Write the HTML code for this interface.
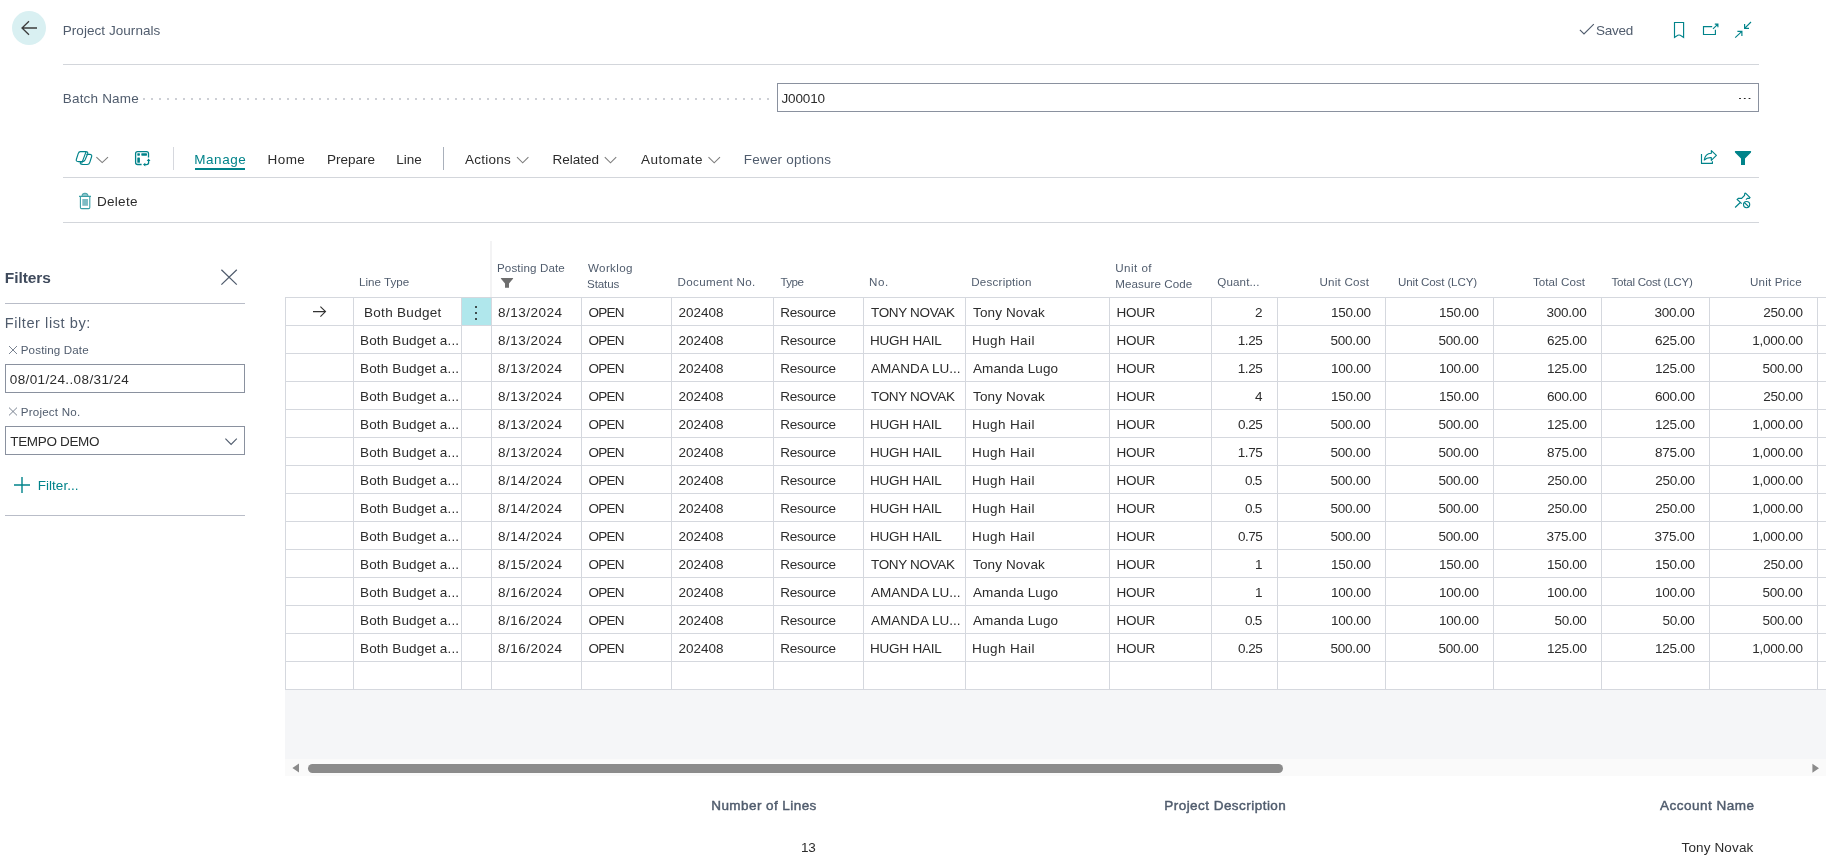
<!DOCTYPE html>
<html><head><meta charset="utf-8"><title>Project Journals</title>
<style>
*{box-sizing:border-box;margin:0;padding:0}
html,body{width:1826px;height:867px;overflow:hidden;background:#fff}
body{font-family:"Liberation Sans",sans-serif;font-size:14px;color:#212121;position:relative}
.a{position:absolute;white-space:nowrap}
.t14{font-size:14px;line-height:20px}
.hdr{color:#505c6d}
.teal{color:#00838a}
.line{position:absolute;height:1px;background:#d3d6db}
/* grid */
.hl{position:absolute;left:285px;width:1541px;height:1px;background:#d5d8de}
.vl{position:absolute;top:297px;height:393px;width:1px;background:#d5d8de}
.c{position:absolute;white-space:nowrap;height:28px;line-height:28px;font-size:14px;color:#212121;padding-top:1px}
.t{position:absolute;white-space:nowrap;line-height:20px}
.ch{position:absolute;white-space:nowrap;font-size:12px;line-height:16px;color:#505c6d}
.ft{position:absolute;white-space:nowrap;font-size:14px;line-height:20px;text-align:right;width:300px}
.ftb{font-weight:bold;color:#505c6d}
</style></head><body>

<!-- top bar -->
<div class="a" style="left:12px;top:11px;width:34px;height:34px;border-radius:50%;background:#d9f0f2"></div>


<div class="line" style="left:63px;top:64px;width:1696px"></div>

<!-- batch name -->
<div class="a" style="left:143px;top:98px;width:626px;height:2px;background-image:linear-gradient(90deg,#cdcfd5 2px,transparent 2px);background-size:8px 2px"></div>
<div class="a" style="left:777px;top:83px;width:982px;height:29px;border:1px solid #8a919f;background:#fff"></div>
<div class="a" style="left:1739.4px;top:97.5px;width:1.8px;height:1.8px;border-radius:1px;background:#222;box-shadow:4.75px 0 0 #222,9.5px 0 0 #222"></div>

<!-- action bar -->
<div class="a" style="left:173px;top:147px;width:1px;height:23px;background:#d6d8de"></div>
<div class="a" style="left:195px;top:168px;width:50px;height:2px;background:#00838a"></div>
<div class="a" style="left:443px;top:147px;width:1px;height:23px;background:#a9b0bb"></div>


<div class="line" style="left:63px;top:177px;width:1696px"></div>


<div class="line" style="left:63px;top:222px;width:1696px"></div>

<!-- filter pane -->
<div class="line" style="left:5px;top:303px;width:240px;background:#b9bdc8"></div>
<div class="a" style="left:5px;top:364px;width:240px;height:29px;border:1px solid #8a919f;background:#fff"></div>
<div class="a" style="left:5px;top:426px;width:240px;height:29px;border:1px solid #8a919f;background:#fff"></div>
<div class="line" style="left:5px;top:515px;width:240px;background:#b9bdc8"></div>

<!-- column headers -->
<div class="a" style="left:490px;top:241px;width:2px;height:56px;background:#f3f3f4"></div>

<!-- grid -->
<div class="a" style="left:462px;top:298px;width:29px;height:27px;background:#b0e7ec"></div>
<div class="a" style="left:475.4px;top:306px;width:2px;height:2px;border-radius:1px;background:#1a1a1a;box-shadow:0 6px 0 #1a1a1a,0 12px 0 #1a1a1a"></div>
<div class="hl" style="top:297px"></div>
<div class="hl" style="top:325px"></div>
<div class="hl" style="top:353px"></div>
<div class="hl" style="top:381px"></div>
<div class="hl" style="top:409px"></div>
<div class="hl" style="top:437px"></div>
<div class="hl" style="top:465px"></div>
<div class="hl" style="top:493px"></div>
<div class="hl" style="top:521px"></div>
<div class="hl" style="top:549px"></div>
<div class="hl" style="top:577px"></div>
<div class="hl" style="top:605px"></div>
<div class="hl" style="top:633px"></div>
<div class="hl" style="top:661px"></div>
<div class="hl" style="top:689px"></div>
<div class="vl" style="left:285px"></div>
<div class="vl" style="left:353px"></div>
<div class="vl" style="left:461px"></div>
<div class="vl" style="left:491px"></div>
<div class="vl" style="left:581px"></div>
<div class="vl" style="left:671px"></div>
<div class="vl" style="left:773px"></div>
<div class="vl" style="left:863px"></div>
<div class="vl" style="left:965px"></div>
<div class="vl" style="left:1109px"></div>
<div class="vl" style="left:1211px"></div>
<div class="vl" style="left:1277px"></div>
<div class="vl" style="left:1385px"></div>
<div class="vl" style="left:1493px"></div>
<div class="vl" style="left:1601px"></div>
<div class="vl" style="left:1709px"></div>
<div class="vl" style="left:1817px"></div>
<div id="txt" style="position:absolute;left:0;top:0;width:1826px;height:867px;will-change:transform">
<div class="t" id="title" style="left:62.75px;top:21px;font-size:13.5px;color:#505c6d;letter-spacing:0.05px">Project Journals</div>
<div class="t" id="saved" style="left:1596.0px;top:21px;font-size:13.5px;color:#505c6d;letter-spacing:-0.23px">Saved</div>
<div class="t" id="batch" style="left:62.75px;top:89px;font-size:13.5px;color:#505c6d;letter-spacing:0.19px">Batch Name</div>
<div class="t" id="batchv" style="left:781.5px;top:89px;font-size:13.5px;color:#2c2c2c;letter-spacing:-0.14px">J00010</div>
<div class="t" id="manage" style="left:194.25px;top:150px;font-size:13.5px;color:#00838a;letter-spacing:0.56px">Manage</div>
<div class="t" id="home" style="left:267.5px;top:150px;font-size:13.5px;color:#2c2c2c;letter-spacing:0.45px">Home</div>
<div class="t" id="prepare" style="left:327.0px;top:150px;font-size:13.5px;color:#2c2c2c">Prepare</div>
<div class="t" id="linem" style="left:396.25px;top:150px;font-size:13.5px;color:#2c2c2c">Line</div>
<div class="t" id="actions" style="left:465.0px;top:150px;font-size:13.5px;color:#2c2c2c;letter-spacing:0.23px">Actions</div>
<div class="t" id="related" style="left:552.5px;top:150px;font-size:13.5px;color:#2c2c2c">Related</div>
<div class="t" id="automate" style="left:641.0px;top:150px;font-size:13.5px;color:#2c2c2c;letter-spacing:0.52px">Automate</div>
<div class="t" id="fewer" style="left:743.75px;top:150px;font-size:13.5px;color:#505c6d;letter-spacing:0.21px">Fewer options</div>
<div class="t" id="delete" style="left:97.0px;top:192px;font-size:13.5px;color:#2c2c2c;letter-spacing:0.28px">Delete</div>
<div class="t" id="filters" style="left:4.75px;top:268px;font-size:15.5px;color:#3f4a5c;font-weight:bold;letter-spacing:-0.06px">Filters</div>
<div class="t" id="flb" style="left:4.75px;top:313px;font-size:14.6px;color:#505c6d;letter-spacing:0.55px">Filter list by:</div>
<div class="t" id="pdl" style="left:20.75px;top:340px;font-size:11.6px;color:#505c6d;letter-spacing:0.14px">Posting Date</div>
<div class="t" id="pdv" style="left:9.75px;top:370px;font-size:13.5px;color:#2c2c2c;letter-spacing:0.38px">08/01/24..08/31/24</div>
<div class="t" id="pnl" style="left:20.75px;top:402px;font-size:11.6px;color:#505c6d;letter-spacing:0.21px">Project No.</div>
<div class="t" id="pnv" style="left:10.25px;top:432px;font-size:13.5px;color:#2c2c2c;letter-spacing:-0.33px">TEMPO DEMO</div>
<div class="t" id="filt" style="left:37.75px;top:476px;font-size:13.5px;color:#00838a;letter-spacing:0.03px">Filter...</div>
<div class="t" id="h1" style="left:359.0px;top:272px;font-size:11.6px;color:#505c6d;letter-spacing:0.01px">Line Type</div>
<div class="t" id="h2" style="left:497.0px;top:258px;font-size:11.6px;color:#505c6d;letter-spacing:0.13px">Posting Date</div>
<div class="t" id="h3a" style="left:588.0px;top:258px;font-size:11.6px;color:#505c6d;letter-spacing:0.36px">Worklog</div>
<div class="t" id="h3b" style="left:587.0px;top:274px;font-size:11.6px;color:#505c6d;letter-spacing:-0.1px">Status</div>
<div class="t" id="h4" style="left:677.5px;top:272px;font-size:11.6px;color:#505c6d;letter-spacing:0.34px">Document No.</div>
<div class="t" id="h5" style="left:780.5px;top:272px;font-size:11.6px;color:#505c6d;letter-spacing:-0.57px">Type</div>
<div class="t" id="h6" style="left:869.0px;top:272px;font-size:11.6px;color:#505c6d;letter-spacing:0.61px">No.</div>
<div class="t" id="h7" style="left:971.25px;top:272px;font-size:11.6px;color:#505c6d;letter-spacing:0.22px">Description</div>
<div class="t" id="h8a" style="left:1115.25px;top:258px;font-size:11.6px;color:#505c6d;letter-spacing:0.47px">Unit of</div>
<div class="t" id="h8b" style="left:1115.25px;top:274px;font-size:11.6px;color:#505c6d;letter-spacing:0.08px">Measure Code</div>
<div class="t" id="h9" style="left:1217.25px;top:272px;font-size:11.6px;color:#505c6d;letter-spacing:0.13px">Quant...</div>
<div class="t" id="h10" style="left:1319.5px;top:272px;font-size:11.6px;color:#505c6d;letter-spacing:0.21px">Unit Cost</div>
<div class="t" id="h11" style="left:1398.0px;top:272px;font-size:11.6px;color:#505c6d;letter-spacing:-0.15px">Unit Cost (LCY)</div>
<div class="t" id="h12" style="left:1533.0px;top:272px;font-size:11.6px;color:#505c6d;letter-spacing:0.05px">Total Cost</div>
<div class="t" id="h13" style="left:1611.5px;top:272px;font-size:11.6px;color:#505c6d;letter-spacing:-0.25px">Total Cost (LCY)</div>
<div class="t" id="h14" style="left:1750.0px;top:272px;font-size:11.6px;color:#505c6d;letter-spacing:0.16px">Unit Price</div>
<div class="t" id="f1" style="left:711.25px;top:796px;font-size:13.5px;color:#505c6d;-webkit-text-stroke:0.45px #505c6d;letter-spacing:0.43px">Number of Lines</div>
<div class="t" id="f1v" style="left:801.0px;top:838px;font-size:13.5px;color:#2c2c2c;letter-spacing:-0.28px">13</div>
<div class="t" id="f2" style="left:1164.25px;top:796px;font-size:13.5px;color:#505c6d;-webkit-text-stroke:0.45px #505c6d;letter-spacing:0.46px">Project Description</div>
<div class="t" id="f3" style="left:1660.0px;top:796px;font-size:13.5px;color:#505c6d;-webkit-text-stroke:0.45px #505c6d;letter-spacing:0.5px">Account Name</div>
<div class="t" id="f3v" style="left:1681.5px;top:838px;font-size:13.5px;color:#2c2c2c;letter-spacing:0.14px">Tony Novak</div>
<div class="t" style="left:364.0px;top:303px;font-size:13.5px;color:#2c2c2c;letter-spacing:0.3px">Both Budget</div>
<div class="t" style="left:498.0px;top:303px;font-size:13.5px;color:#2c2c2c;letter-spacing:0.49px">8/13/2024</div>
<div class="t" style="left:588.5px;top:303px;font-size:13.5px;color:#2c2c2c;letter-spacing:-0.74px">OPEN</div>
<div class="t" style="left:678.5px;top:303px;font-size:13.5px;color:#2c2c2c;letter-spacing:-0.01px">202408</div>
<div class="t" style="left:780.25px;top:303px;font-size:13.5px;color:#2c2c2c;letter-spacing:-0.28px">Resource</div>
<div class="t" style="left:871.0px;top:303px;font-size:13.5px;color:#2c2c2c;letter-spacing:-0.34px">TONY NOVAK</div>
<div class="t" style="left:973.0px;top:303px;font-size:13.5px;color:#2c2c2c;letter-spacing:0.14px">Tony Novak</div>
<div class="t" style="left:1116.5px;top:303px;font-size:13.5px;color:#2c2c2c;letter-spacing:-0.31px">HOUR</div>
<div class="t" style="left:1255.0px;top:303px;font-size:13.5px;color:#2c2c2c">2</div>
<div class="t" style="left:1331.0px;top:303px;font-size:13.5px;color:#2c2c2c;letter-spacing:-0.27px">150.00</div>
<div class="t" style="left:1439.0px;top:303px;font-size:13.5px;color:#2c2c2c;letter-spacing:-0.27px">150.00</div>
<div class="t" style="left:1546.5px;top:303px;font-size:13.5px;color:#2c2c2c;letter-spacing:-0.23px">300.00</div>
<div class="t" style="left:1654.5px;top:303px;font-size:13.5px;color:#2c2c2c;letter-spacing:-0.23px">300.00</div>
<div class="t" style="left:1763.25px;top:303px;font-size:13.5px;color:#2c2c2c;letter-spacing:-0.29px">250.00</div>
<div class="t" style="left:360.0px;top:331px;font-size:13.5px;color:#2c2c2c;letter-spacing:0.15px">Both Budget a...</div>
<div class="t" style="left:498.0px;top:331px;font-size:13.5px;color:#2c2c2c;letter-spacing:0.49px">8/13/2024</div>
<div class="t" style="left:588.5px;top:331px;font-size:13.5px;color:#2c2c2c;letter-spacing:-0.74px">OPEN</div>
<div class="t" style="left:678.5px;top:331px;font-size:13.5px;color:#2c2c2c;letter-spacing:-0.01px">202408</div>
<div class="t" style="left:780.25px;top:331px;font-size:13.5px;color:#2c2c2c;letter-spacing:-0.28px">Resource</div>
<div class="t" style="left:870.0px;top:331px;font-size:13.5px;color:#2c2c2c;letter-spacing:-0.22px">HUGH HAIL</div>
<div class="t" style="left:972.0px;top:331px;font-size:13.5px;color:#2c2c2c;letter-spacing:0.39px">Hugh Hail</div>
<div class="t" style="left:1116.5px;top:331px;font-size:13.5px;color:#2c2c2c;letter-spacing:-0.31px">HOUR</div>
<div class="t" style="left:1237.75px;top:331px;font-size:13.5px;color:#2c2c2c;letter-spacing:-0.44px">1.25</div>
<div class="t" style="left:1330.5px;top:331px;font-size:13.5px;color:#2c2c2c;letter-spacing:-0.22px">500.00</div>
<div class="t" style="left:1438.5px;top:331px;font-size:13.5px;color:#2c2c2c;letter-spacing:-0.22px">500.00</div>
<div class="t" style="left:1547.0px;top:331px;font-size:13.5px;color:#2c2c2c;letter-spacing:-0.26px">625.00</div>
<div class="t" style="left:1655.0px;top:331px;font-size:13.5px;color:#2c2c2c;letter-spacing:-0.26px">625.00</div>
<div class="t" style="left:1752.25px;top:331px;font-size:13.5px;color:#2c2c2c;letter-spacing:-0.25px">1,000.00</div>
<div class="t" style="left:360.0px;top:359px;font-size:13.5px;color:#2c2c2c;letter-spacing:0.15px">Both Budget a...</div>
<div class="t" style="left:498.0px;top:359px;font-size:13.5px;color:#2c2c2c;letter-spacing:0.49px">8/13/2024</div>
<div class="t" style="left:588.5px;top:359px;font-size:13.5px;color:#2c2c2c;letter-spacing:-0.74px">OPEN</div>
<div class="t" style="left:678.5px;top:359px;font-size:13.5px;color:#2c2c2c;letter-spacing:-0.01px">202408</div>
<div class="t" style="left:780.25px;top:359px;font-size:13.5px;color:#2c2c2c;letter-spacing:-0.28px">Resource</div>
<div class="t" style="left:871.0px;top:359px;font-size:13.5px;color:#2c2c2c;letter-spacing:0.03px">AMANDA LU...</div>
<div class="t" style="left:973.0px;top:359px;font-size:13.5px;color:#2c2c2c;letter-spacing:0.1px">Amanda Lugo</div>
<div class="t" style="left:1116.5px;top:359px;font-size:13.5px;color:#2c2c2c;letter-spacing:-0.31px">HOUR</div>
<div class="t" style="left:1237.75px;top:359px;font-size:13.5px;color:#2c2c2c;letter-spacing:-0.44px">1.25</div>
<div class="t" style="left:1331.0px;top:359px;font-size:13.5px;color:#2c2c2c;letter-spacing:-0.27px">100.00</div>
<div class="t" style="left:1439.0px;top:359px;font-size:13.5px;color:#2c2c2c;letter-spacing:-0.27px">100.00</div>
<div class="t" style="left:1547.0px;top:359px;font-size:13.5px;color:#2c2c2c;letter-spacing:-0.27px">125.00</div>
<div class="t" style="left:1655.0px;top:359px;font-size:13.5px;color:#2c2c2c;letter-spacing:-0.27px">125.00</div>
<div class="t" style="left:1762.5px;top:359px;font-size:13.5px;color:#2c2c2c;letter-spacing:-0.22px">500.00</div>
<div class="t" style="left:360.0px;top:387px;font-size:13.5px;color:#2c2c2c;letter-spacing:0.15px">Both Budget a...</div>
<div class="t" style="left:498.0px;top:387px;font-size:13.5px;color:#2c2c2c;letter-spacing:0.49px">8/13/2024</div>
<div class="t" style="left:588.5px;top:387px;font-size:13.5px;color:#2c2c2c;letter-spacing:-0.74px">OPEN</div>
<div class="t" style="left:678.5px;top:387px;font-size:13.5px;color:#2c2c2c;letter-spacing:-0.01px">202408</div>
<div class="t" style="left:780.25px;top:387px;font-size:13.5px;color:#2c2c2c;letter-spacing:-0.28px">Resource</div>
<div class="t" style="left:871.0px;top:387px;font-size:13.5px;color:#2c2c2c;letter-spacing:-0.34px">TONY NOVAK</div>
<div class="t" style="left:973.0px;top:387px;font-size:13.5px;color:#2c2c2c;letter-spacing:0.14px">Tony Novak</div>
<div class="t" style="left:1116.5px;top:387px;font-size:13.5px;color:#2c2c2c;letter-spacing:-0.31px">HOUR</div>
<div class="t" style="left:1255.0px;top:387px;font-size:13.5px;color:#2c2c2c">4</div>
<div class="t" style="left:1331.0px;top:387px;font-size:13.5px;color:#2c2c2c;letter-spacing:-0.27px">150.00</div>
<div class="t" style="left:1439.0px;top:387px;font-size:13.5px;color:#2c2c2c;letter-spacing:-0.27px">150.00</div>
<div class="t" style="left:1547.0px;top:387px;font-size:13.5px;color:#2c2c2c;letter-spacing:-0.26px">600.00</div>
<div class="t" style="left:1655.0px;top:387px;font-size:13.5px;color:#2c2c2c;letter-spacing:-0.26px">600.00</div>
<div class="t" style="left:1763.25px;top:387px;font-size:13.5px;color:#2c2c2c;letter-spacing:-0.29px">250.00</div>
<div class="t" style="left:360.0px;top:415px;font-size:13.5px;color:#2c2c2c;letter-spacing:0.15px">Both Budget a...</div>
<div class="t" style="left:498.0px;top:415px;font-size:13.5px;color:#2c2c2c;letter-spacing:0.49px">8/13/2024</div>
<div class="t" style="left:588.5px;top:415px;font-size:13.5px;color:#2c2c2c;letter-spacing:-0.74px">OPEN</div>
<div class="t" style="left:678.5px;top:415px;font-size:13.5px;color:#2c2c2c;letter-spacing:-0.01px">202408</div>
<div class="t" style="left:780.25px;top:415px;font-size:13.5px;color:#2c2c2c;letter-spacing:-0.28px">Resource</div>
<div class="t" style="left:870.0px;top:415px;font-size:13.5px;color:#2c2c2c;letter-spacing:-0.22px">HUGH HAIL</div>
<div class="t" style="left:972.0px;top:415px;font-size:13.5px;color:#2c2c2c;letter-spacing:0.39px">Hugh Hail</div>
<div class="t" style="left:1116.5px;top:415px;font-size:13.5px;color:#2c2c2c;letter-spacing:-0.31px">HOUR</div>
<div class="t" style="left:1238.0px;top:415px;font-size:13.5px;color:#2c2c2c;letter-spacing:-0.51px">0.25</div>
<div class="t" style="left:1330.5px;top:415px;font-size:13.5px;color:#2c2c2c;letter-spacing:-0.22px">500.00</div>
<div class="t" style="left:1438.5px;top:415px;font-size:13.5px;color:#2c2c2c;letter-spacing:-0.22px">500.00</div>
<div class="t" style="left:1547.0px;top:415px;font-size:13.5px;color:#2c2c2c;letter-spacing:-0.27px">125.00</div>
<div class="t" style="left:1655.0px;top:415px;font-size:13.5px;color:#2c2c2c;letter-spacing:-0.27px">125.00</div>
<div class="t" style="left:1752.25px;top:415px;font-size:13.5px;color:#2c2c2c;letter-spacing:-0.25px">1,000.00</div>
<div class="t" style="left:360.0px;top:443px;font-size:13.5px;color:#2c2c2c;letter-spacing:0.15px">Both Budget a...</div>
<div class="t" style="left:498.0px;top:443px;font-size:13.5px;color:#2c2c2c;letter-spacing:0.49px">8/13/2024</div>
<div class="t" style="left:588.5px;top:443px;font-size:13.5px;color:#2c2c2c;letter-spacing:-0.74px">OPEN</div>
<div class="t" style="left:678.5px;top:443px;font-size:13.5px;color:#2c2c2c;letter-spacing:-0.01px">202408</div>
<div class="t" style="left:780.25px;top:443px;font-size:13.5px;color:#2c2c2c;letter-spacing:-0.28px">Resource</div>
<div class="t" style="left:870.0px;top:443px;font-size:13.5px;color:#2c2c2c;letter-spacing:-0.22px">HUGH HAIL</div>
<div class="t" style="left:972.0px;top:443px;font-size:13.5px;color:#2c2c2c;letter-spacing:0.39px">Hugh Hail</div>
<div class="t" style="left:1116.5px;top:443px;font-size:13.5px;color:#2c2c2c;letter-spacing:-0.31px">HOUR</div>
<div class="t" style="left:1237.75px;top:443px;font-size:13.5px;color:#2c2c2c;letter-spacing:-0.44px">1.75</div>
<div class="t" style="left:1330.5px;top:443px;font-size:13.5px;color:#2c2c2c;letter-spacing:-0.22px">500.00</div>
<div class="t" style="left:1438.5px;top:443px;font-size:13.5px;color:#2c2c2c;letter-spacing:-0.22px">500.00</div>
<div class="t" style="left:1547.0px;top:443px;font-size:13.5px;color:#2c2c2c;letter-spacing:-0.27px">875.00</div>
<div class="t" style="left:1655.0px;top:443px;font-size:13.5px;color:#2c2c2c;letter-spacing:-0.27px">875.00</div>
<div class="t" style="left:1752.25px;top:443px;font-size:13.5px;color:#2c2c2c;letter-spacing:-0.25px">1,000.00</div>
<div class="t" style="left:360.0px;top:471px;font-size:13.5px;color:#2c2c2c;letter-spacing:0.15px">Both Budget a...</div>
<div class="t" style="left:498.0px;top:471px;font-size:13.5px;color:#2c2c2c;letter-spacing:0.49px">8/14/2024</div>
<div class="t" style="left:588.5px;top:471px;font-size:13.5px;color:#2c2c2c;letter-spacing:-0.74px">OPEN</div>
<div class="t" style="left:678.5px;top:471px;font-size:13.5px;color:#2c2c2c;letter-spacing:-0.01px">202408</div>
<div class="t" style="left:780.25px;top:471px;font-size:13.5px;color:#2c2c2c;letter-spacing:-0.28px">Resource</div>
<div class="t" style="left:870.0px;top:471px;font-size:13.5px;color:#2c2c2c;letter-spacing:-0.22px">HUGH HAIL</div>
<div class="t" style="left:972.0px;top:471px;font-size:13.5px;color:#2c2c2c;letter-spacing:0.39px">Hugh Hail</div>
<div class="t" style="left:1116.5px;top:471px;font-size:13.5px;color:#2c2c2c;letter-spacing:-0.31px">HOUR</div>
<div class="t" style="left:1245.0px;top:471px;font-size:13.5px;color:#2c2c2c;letter-spacing:-0.76px">0.5</div>
<div class="t" style="left:1330.5px;top:471px;font-size:13.5px;color:#2c2c2c;letter-spacing:-0.22px">500.00</div>
<div class="t" style="left:1438.5px;top:471px;font-size:13.5px;color:#2c2c2c;letter-spacing:-0.22px">500.00</div>
<div class="t" style="left:1547.25px;top:471px;font-size:13.5px;color:#2c2c2c;letter-spacing:-0.29px">250.00</div>
<div class="t" style="left:1655.25px;top:471px;font-size:13.5px;color:#2c2c2c;letter-spacing:-0.29px">250.00</div>
<div class="t" style="left:1752.25px;top:471px;font-size:13.5px;color:#2c2c2c;letter-spacing:-0.25px">1,000.00</div>
<div class="t" style="left:360.0px;top:499px;font-size:13.5px;color:#2c2c2c;letter-spacing:0.15px">Both Budget a...</div>
<div class="t" style="left:498.0px;top:499px;font-size:13.5px;color:#2c2c2c;letter-spacing:0.49px">8/14/2024</div>
<div class="t" style="left:588.5px;top:499px;font-size:13.5px;color:#2c2c2c;letter-spacing:-0.74px">OPEN</div>
<div class="t" style="left:678.5px;top:499px;font-size:13.5px;color:#2c2c2c;letter-spacing:-0.01px">202408</div>
<div class="t" style="left:780.25px;top:499px;font-size:13.5px;color:#2c2c2c;letter-spacing:-0.28px">Resource</div>
<div class="t" style="left:870.0px;top:499px;font-size:13.5px;color:#2c2c2c;letter-spacing:-0.22px">HUGH HAIL</div>
<div class="t" style="left:972.0px;top:499px;font-size:13.5px;color:#2c2c2c;letter-spacing:0.39px">Hugh Hail</div>
<div class="t" style="left:1116.5px;top:499px;font-size:13.5px;color:#2c2c2c;letter-spacing:-0.31px">HOUR</div>
<div class="t" style="left:1245.0px;top:499px;font-size:13.5px;color:#2c2c2c;letter-spacing:-0.76px">0.5</div>
<div class="t" style="left:1330.5px;top:499px;font-size:13.5px;color:#2c2c2c;letter-spacing:-0.22px">500.00</div>
<div class="t" style="left:1438.5px;top:499px;font-size:13.5px;color:#2c2c2c;letter-spacing:-0.22px">500.00</div>
<div class="t" style="left:1547.25px;top:499px;font-size:13.5px;color:#2c2c2c;letter-spacing:-0.29px">250.00</div>
<div class="t" style="left:1655.25px;top:499px;font-size:13.5px;color:#2c2c2c;letter-spacing:-0.29px">250.00</div>
<div class="t" style="left:1752.25px;top:499px;font-size:13.5px;color:#2c2c2c;letter-spacing:-0.25px">1,000.00</div>
<div class="t" style="left:360.0px;top:527px;font-size:13.5px;color:#2c2c2c;letter-spacing:0.15px">Both Budget a...</div>
<div class="t" style="left:498.0px;top:527px;font-size:13.5px;color:#2c2c2c;letter-spacing:0.49px">8/14/2024</div>
<div class="t" style="left:588.5px;top:527px;font-size:13.5px;color:#2c2c2c;letter-spacing:-0.74px">OPEN</div>
<div class="t" style="left:678.5px;top:527px;font-size:13.5px;color:#2c2c2c;letter-spacing:-0.01px">202408</div>
<div class="t" style="left:780.25px;top:527px;font-size:13.5px;color:#2c2c2c;letter-spacing:-0.28px">Resource</div>
<div class="t" style="left:870.0px;top:527px;font-size:13.5px;color:#2c2c2c;letter-spacing:-0.22px">HUGH HAIL</div>
<div class="t" style="left:972.0px;top:527px;font-size:13.5px;color:#2c2c2c;letter-spacing:0.39px">Hugh Hail</div>
<div class="t" style="left:1116.5px;top:527px;font-size:13.5px;color:#2c2c2c;letter-spacing:-0.31px">HOUR</div>
<div class="t" style="left:1238.0px;top:527px;font-size:13.5px;color:#2c2c2c;letter-spacing:-0.51px">0.75</div>
<div class="t" style="left:1330.5px;top:527px;font-size:13.5px;color:#2c2c2c;letter-spacing:-0.22px">500.00</div>
<div class="t" style="left:1438.5px;top:527px;font-size:13.5px;color:#2c2c2c;letter-spacing:-0.22px">500.00</div>
<div class="t" style="left:1546.5px;top:527px;font-size:13.5px;color:#2c2c2c;letter-spacing:-0.23px">375.00</div>
<div class="t" style="left:1654.5px;top:527px;font-size:13.5px;color:#2c2c2c;letter-spacing:-0.23px">375.00</div>
<div class="t" style="left:1752.25px;top:527px;font-size:13.5px;color:#2c2c2c;letter-spacing:-0.25px">1,000.00</div>
<div class="t" style="left:360.0px;top:555px;font-size:13.5px;color:#2c2c2c;letter-spacing:0.15px">Both Budget a...</div>
<div class="t" style="left:498.0px;top:555px;font-size:13.5px;color:#2c2c2c;letter-spacing:0.49px">8/15/2024</div>
<div class="t" style="left:588.5px;top:555px;font-size:13.5px;color:#2c2c2c;letter-spacing:-0.74px">OPEN</div>
<div class="t" style="left:678.5px;top:555px;font-size:13.5px;color:#2c2c2c;letter-spacing:-0.01px">202408</div>
<div class="t" style="left:780.25px;top:555px;font-size:13.5px;color:#2c2c2c;letter-spacing:-0.28px">Resource</div>
<div class="t" style="left:871.0px;top:555px;font-size:13.5px;color:#2c2c2c;letter-spacing:-0.34px">TONY NOVAK</div>
<div class="t" style="left:973.0px;top:555px;font-size:13.5px;color:#2c2c2c;letter-spacing:0.14px">Tony Novak</div>
<div class="t" style="left:1116.5px;top:555px;font-size:13.5px;color:#2c2c2c;letter-spacing:-0.31px">HOUR</div>
<div class="t" style="left:1255.0px;top:555px;font-size:13.5px;color:#2c2c2c">1</div>
<div class="t" style="left:1331.0px;top:555px;font-size:13.5px;color:#2c2c2c;letter-spacing:-0.27px">150.00</div>
<div class="t" style="left:1439.0px;top:555px;font-size:13.5px;color:#2c2c2c;letter-spacing:-0.27px">150.00</div>
<div class="t" style="left:1547.0px;top:555px;font-size:13.5px;color:#2c2c2c;letter-spacing:-0.27px">150.00</div>
<div class="t" style="left:1655.0px;top:555px;font-size:13.5px;color:#2c2c2c;letter-spacing:-0.27px">150.00</div>
<div class="t" style="left:1763.25px;top:555px;font-size:13.5px;color:#2c2c2c;letter-spacing:-0.29px">250.00</div>
<div class="t" style="left:360.0px;top:583px;font-size:13.5px;color:#2c2c2c;letter-spacing:0.15px">Both Budget a...</div>
<div class="t" style="left:498.0px;top:583px;font-size:13.5px;color:#2c2c2c;letter-spacing:0.49px">8/16/2024</div>
<div class="t" style="left:588.5px;top:583px;font-size:13.5px;color:#2c2c2c;letter-spacing:-0.74px">OPEN</div>
<div class="t" style="left:678.5px;top:583px;font-size:13.5px;color:#2c2c2c;letter-spacing:-0.01px">202408</div>
<div class="t" style="left:780.25px;top:583px;font-size:13.5px;color:#2c2c2c;letter-spacing:-0.28px">Resource</div>
<div class="t" style="left:871.0px;top:583px;font-size:13.5px;color:#2c2c2c;letter-spacing:0.03px">AMANDA LU...</div>
<div class="t" style="left:973.0px;top:583px;font-size:13.5px;color:#2c2c2c;letter-spacing:0.1px">Amanda Lugo</div>
<div class="t" style="left:1116.5px;top:583px;font-size:13.5px;color:#2c2c2c;letter-spacing:-0.31px">HOUR</div>
<div class="t" style="left:1255.0px;top:583px;font-size:13.5px;color:#2c2c2c">1</div>
<div class="t" style="left:1331.0px;top:583px;font-size:13.5px;color:#2c2c2c;letter-spacing:-0.27px">100.00</div>
<div class="t" style="left:1439.0px;top:583px;font-size:13.5px;color:#2c2c2c;letter-spacing:-0.27px">100.00</div>
<div class="t" style="left:1547.0px;top:583px;font-size:13.5px;color:#2c2c2c;letter-spacing:-0.27px">100.00</div>
<div class="t" style="left:1655.0px;top:583px;font-size:13.5px;color:#2c2c2c;letter-spacing:-0.27px">100.00</div>
<div class="t" style="left:1762.5px;top:583px;font-size:13.5px;color:#2c2c2c;letter-spacing:-0.22px">500.00</div>
<div class="t" style="left:360.0px;top:611px;font-size:13.5px;color:#2c2c2c;letter-spacing:0.15px">Both Budget a...</div>
<div class="t" style="left:498.0px;top:611px;font-size:13.5px;color:#2c2c2c;letter-spacing:0.49px">8/16/2024</div>
<div class="t" style="left:588.5px;top:611px;font-size:13.5px;color:#2c2c2c;letter-spacing:-0.74px">OPEN</div>
<div class="t" style="left:678.5px;top:611px;font-size:13.5px;color:#2c2c2c;letter-spacing:-0.01px">202408</div>
<div class="t" style="left:780.25px;top:611px;font-size:13.5px;color:#2c2c2c;letter-spacing:-0.28px">Resource</div>
<div class="t" style="left:871.0px;top:611px;font-size:13.5px;color:#2c2c2c;letter-spacing:0.03px">AMANDA LU...</div>
<div class="t" style="left:973.0px;top:611px;font-size:13.5px;color:#2c2c2c;letter-spacing:0.1px">Amanda Lugo</div>
<div class="t" style="left:1116.5px;top:611px;font-size:13.5px;color:#2c2c2c;letter-spacing:-0.31px">HOUR</div>
<div class="t" style="left:1245.0px;top:611px;font-size:13.5px;color:#2c2c2c;letter-spacing:-0.76px">0.5</div>
<div class="t" style="left:1331.0px;top:611px;font-size:13.5px;color:#2c2c2c;letter-spacing:-0.27px">100.00</div>
<div class="t" style="left:1439.0px;top:611px;font-size:13.5px;color:#2c2c2c;letter-spacing:-0.27px">100.00</div>
<div class="t" style="left:1554.5px;top:611px;font-size:13.5px;color:#2c2c2c;letter-spacing:-0.36px">50.00</div>
<div class="t" style="left:1662.5px;top:611px;font-size:13.5px;color:#2c2c2c;letter-spacing:-0.36px">50.00</div>
<div class="t" style="left:1762.5px;top:611px;font-size:13.5px;color:#2c2c2c;letter-spacing:-0.22px">500.00</div>
<div class="t" style="left:360.0px;top:639px;font-size:13.5px;color:#2c2c2c;letter-spacing:0.15px">Both Budget a...</div>
<div class="t" style="left:498.0px;top:639px;font-size:13.5px;color:#2c2c2c;letter-spacing:0.49px">8/16/2024</div>
<div class="t" style="left:588.5px;top:639px;font-size:13.5px;color:#2c2c2c;letter-spacing:-0.74px">OPEN</div>
<div class="t" style="left:678.5px;top:639px;font-size:13.5px;color:#2c2c2c;letter-spacing:-0.01px">202408</div>
<div class="t" style="left:780.25px;top:639px;font-size:13.5px;color:#2c2c2c;letter-spacing:-0.28px">Resource</div>
<div class="t" style="left:870.0px;top:639px;font-size:13.5px;color:#2c2c2c;letter-spacing:-0.22px">HUGH HAIL</div>
<div class="t" style="left:972.0px;top:639px;font-size:13.5px;color:#2c2c2c;letter-spacing:0.39px">Hugh Hail</div>
<div class="t" style="left:1116.5px;top:639px;font-size:13.5px;color:#2c2c2c;letter-spacing:-0.31px">HOUR</div>
<div class="t" style="left:1238.0px;top:639px;font-size:13.5px;color:#2c2c2c;letter-spacing:-0.51px">0.25</div>
<div class="t" style="left:1330.5px;top:639px;font-size:13.5px;color:#2c2c2c;letter-spacing:-0.22px">500.00</div>
<div class="t" style="left:1438.5px;top:639px;font-size:13.5px;color:#2c2c2c;letter-spacing:-0.22px">500.00</div>
<div class="t" style="left:1547.0px;top:639px;font-size:13.5px;color:#2c2c2c;letter-spacing:-0.27px">125.00</div>
<div class="t" style="left:1655.0px;top:639px;font-size:13.5px;color:#2c2c2c;letter-spacing:-0.27px">125.00</div>
<div class="t" style="left:1752.25px;top:639px;font-size:13.5px;color:#2c2c2c;letter-spacing:-0.25px">1,000.00</div>
</div>

<!-- grey area + scrollbar -->
<div class="a" style="left:285px;top:690px;width:1541px;height:69px;background:#f5f6f8"></div>
<div class="a" style="left:285px;top:759px;width:1541px;height:17px;background:#fafafa"></div>
<div class="a" style="left:308px;top:764px;width:975px;height:9px;border-radius:5px;background:#8b8b8b"></div>

<!-- footer -->
<svg class="a" style="left:0;top:0" width="1826" height="867" viewBox="0 0 1826 867" fill="none">
<!-- back arrow -->
<path d="M29 21.2 L22 28 L29 34.8 M22 28 H37" stroke="#3c3c3c" stroke-width="1.3"/>
<!-- saved check -->
<path d="M1579.9 29.8 L1584 33.9 L1593.8 24.2" stroke="#505c6d" stroke-width="1.15"/>
<g stroke="#00838a" stroke-width="1.15">
<!-- bookmark -->
<path d="M1674.5 22.5 H1683.6 V37.4 L1681.5 36 Q1679 34 1676.6 36 L1674.5 37.4 Z"/>
<!-- popout -->
<path d="M1712.2 26.6 H1703.5 V34.5 H1715.4 V29.8 M1713 28.8 L1717.9 24.1 M1714.8 24.1 H1717.9 V27.2"/>
<!-- collapse -->
<path d="M1751 22 L1744.6 28.4 M1744.6 24 V28.4 H1749 M1735.2 37.7 L1741.9 31.4 M1737.4 31.4 H1741.9 V36"/>
<!-- share -->
<path d="M1701.5 154 V163.4 H1712.4 V161.2 M1711.35 150.6 L1716.4 155.4 L1711.3 160.3 V157.6 Q1707 157.2 1704.3 160 Q1705 153.6 1711.35 153.2 Z" stroke-linejoin="round"/>
<!-- pin -->
<path d="M1735.1 207.5 L1740.3 202.5 M1741.7 203.6 L1737.2 199.4 L1738.3 198.4 H1741.6 L1744.5 195.5 L1744.8 193.4 Q1745.2 192.7 1745.8 193.3 L1750 197.5 L1749.3 198.4 H1747.4 L1745.9 199.6 M1744.3 202.5 L1748.9 206.8"/>
<circle cx="1746.6" cy="204.6" r="3.1"/>
<!-- copilot -->
<path d="M80.4 151.6 H85.6 Q88.4 151.6 87.6 154 L85 160 Q84.2 161.6 82.4 161.6 H78.4 Q75.6 161.6 76.4 159.2 L78.2 153.6 Q78.8 151.6 80.4 151.6 Z M86 151.9 L81.6 163.6" stroke-linejoin="round"/>
<path d="M86.4 154.4 H89.6 Q92.4 154.4 91.6 156.8 L89.8 162.4 Q89.2 164.5 87.2 164.5 H82.6 Q79.6 164.5 80.4 162.2 L80.8 161.4" stroke-linejoin="round"/>
<!-- table icon -->
<path d="M148.5 157.4 V153.6 Q148.5 151.6 146.5 151.6 H137.6 Q135.6 151.6 135.6 153.6 V162.5 Q135.6 164.5 137.6 164.5 H141.6 M148.6 160.4 V162.6 Q148.6 164.6 146.6 164.6 H144.6" stroke-width="1.3"/>
<!-- plus -->
<path d="M22 477 V493 M14 485 H30" stroke-width="1.4"/>
</g>
<g fill="#00838a">
<path d="M1735.6 151.1 H1750.4 Q1751.6 151.1 1751 152.4 L1745 158.6 V164.9 H1741 V158.6 L1735 152.4 Q1734.4 151.1 1735.6 151.1 Z"/>
<rect x="137.3" y="153.2" width="2.6" height="2.5" rx="0.6"/><rect x="141.3" y="153.2" width="5.7" height="2.5" rx="0.6"/><rect x="137.3" y="157.5" width="2.6" height="5.3" rx="0.6"/>
<path d="M146.7 160.9 L148.6 158.6 L150.5 160.9 Z M145.3 162.7 L143 164.6 L145.3 166.5 Z"/>
</g>
<!-- chevrons -->
<g stroke="#7d7d7d" stroke-width="1.1">
<path d="M96.4 157.2 L102.2 162.6 L108 157.2"/>
<path d="M517 157.2 L522.7 162.8 L528.4 157.2"/>
<path d="M604.8 157.2 L610.5 162.8 L616.2 157.2"/>
<path d="M708.5 157.2 L714.2 162.8 L720 157.2"/>
</g>
<!-- trash -->
<path d="M79 196.4 H91 M80.4 196.4 V207.4 Q80.4 208.6 81.6 208.6 H88.6 Q89.8 208.6 89.8 207.4 V196.4 M82 196 Q82.4 193.4 85 193.4 Q87.6 193.4 88 196" stroke="#3a9ea5" stroke-width="1.1"/>
<rect x="82.3" y="199" width="5.7" height="6.8" fill="#7fbcc4"/><path d="M82 196 Q82.4 193.2 85 193.2 Q87.6 193.2 88 196 Z" fill="#6db5bd" opacity="0.75"/>
<!-- filter pane close X -->
<path d="M221.4 269.8 L236.8 284.6 M236.8 269.8 L221.4 284.6" stroke="#505c6d" stroke-width="1.25"/>
<path d="M9 346 L17 354 M17 346 L9 354" stroke="#6b7585" stroke-width="0.9"/>
<path d="M9 407.6 L17 415.4 M17 407.6 L9 415.4" stroke="#6b7585" stroke-width="0.9"/>
<path d="M225.4 438.6 L231.1 444.4 L236.8 438.6" stroke="#505c6d" stroke-width="1.1"/>
<!-- header filter glyph -->
<path d="M501.3 278 H512.7 Q513.5 278 513 278.8 L509 283.4 V287.8 H505 V283.4 L501 278.8 Q500.5 278 501.3 278 Z" fill="#6e6e6e"/>
<!-- row arrow -->
<path d="M313 311.6 H325.4 M320.4 306.6 L325.5 311.6 L320.4 316.7" stroke="#333" stroke-width="1.1"/>
<!-- scroll arrows -->
<path d="M299 763.6 V772.4 L292.4 768 Z M1812.4 763.8 V772.8 L1819 768.3 Z" fill="#8b8b8b"/>
</svg>
</body></html>
